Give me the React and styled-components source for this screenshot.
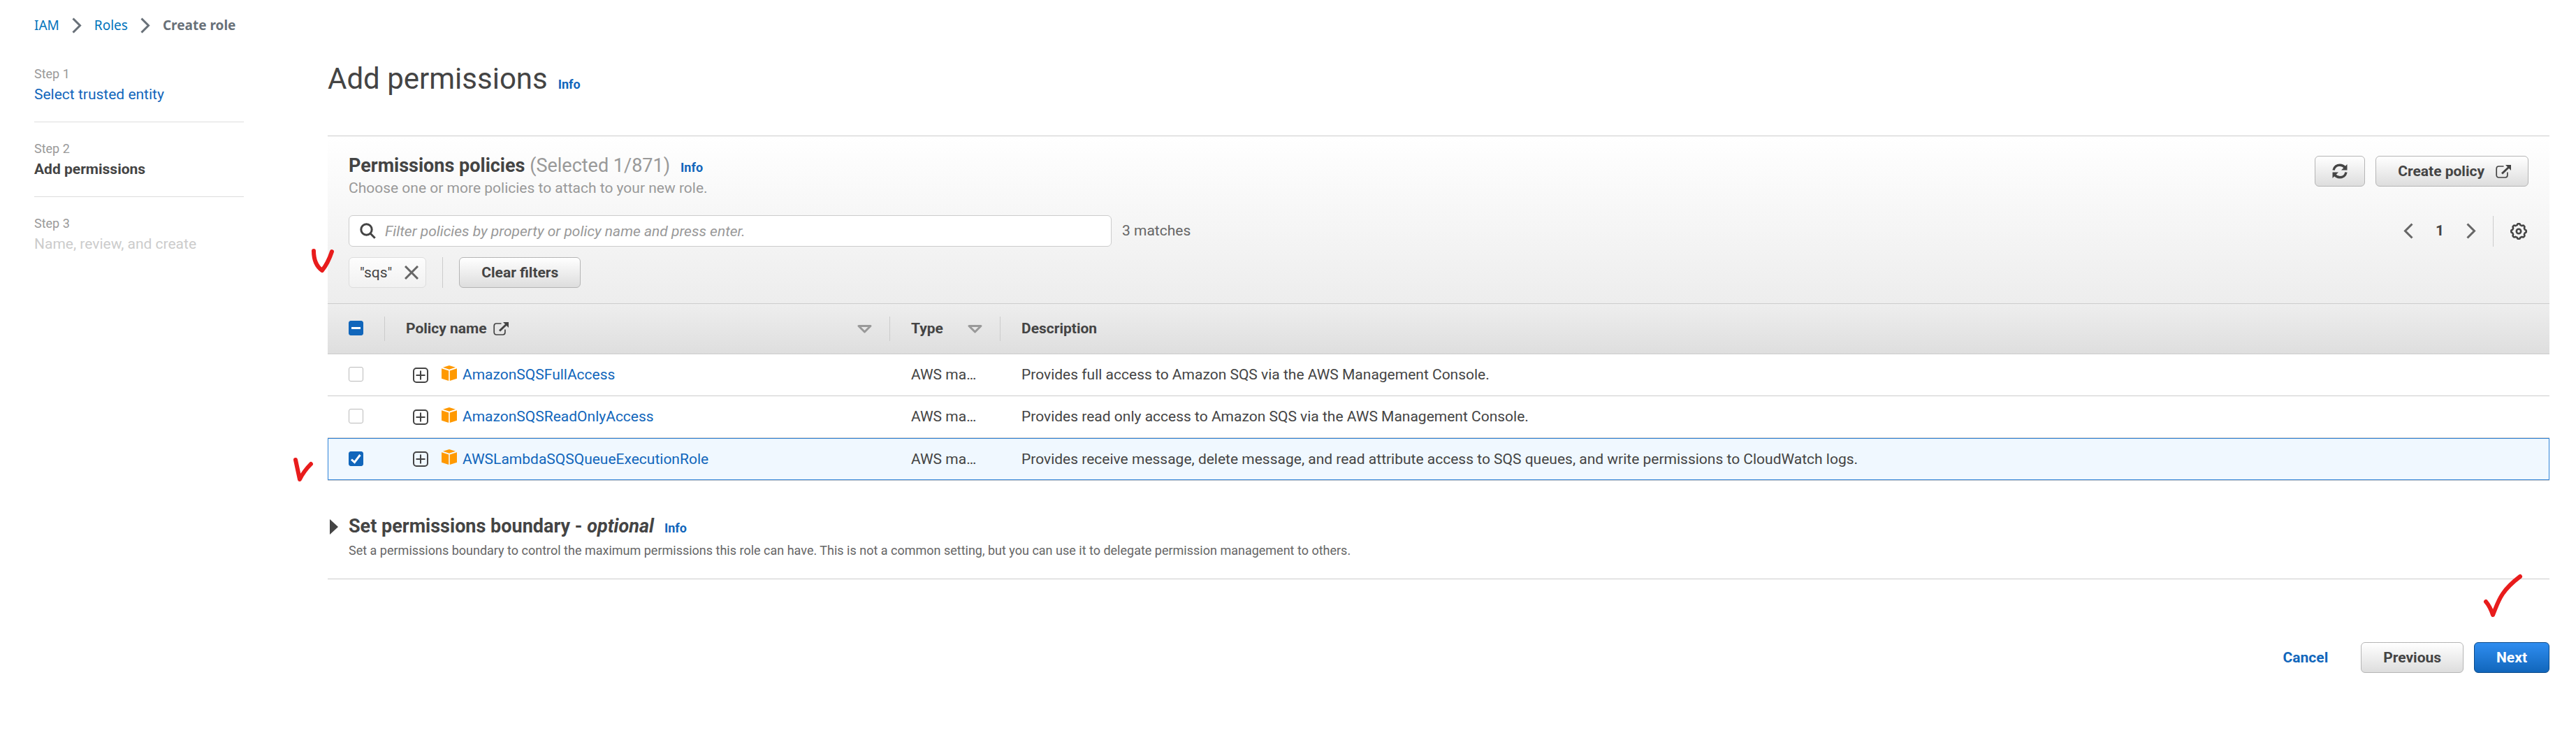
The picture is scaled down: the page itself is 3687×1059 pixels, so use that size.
import React, { useState } from "react";
import styled, { createGlobalStyle, css } from "styled-components";

const color = {
  text: "#444",
  muted: "#999",
  secondary: "#666",
  disabled: "#ccc",
  line: "#ccc",
  link: "#1166bb",
  accent: "#1166bb",
  selectedLine: "#3184d8",
  selectedFill: "#f0f8ff",
  ink: "#e81c1c",
};

const GlobalStyle = createGlobalStyle`
  *, *::before, *::after { box-sizing: border-box; }
  body {
    margin: 0;
    background: #fff;
    color: ${color.text};
    font-family: Roboto, "Liberation Sans", sans-serif;
    font-size: 21px;
    line-height: 27px;
  }
  button, input { font: inherit; color: inherit; }
  svg { display: block; flex: none; }
`;

const Page = styled.div`
  padding: 23px 38px 48px 49px;
`;

const Breadcrumbs = styled.nav`
  display: flex;
  align-items: center;
  gap: 18px;
  font-family: "Noto Sans", "Open Sans", sans-serif;
  font-size: 19px;
  color: #687078;
`;

const Crumb = styled.a`
  color: #0073bb;
  text-decoration: none;
`;

const CurrentCrumb = styled.strong`
  font-weight: 700;
`;

const Columns = styled.div`
  display: grid;
  grid-template-columns: 300px minmax(0, 1fr);
  gap: 120px;
`;

const Steps = styled.ol`
  list-style: none;
  margin: 0;
  padding: 18px 0 0;
`;

const Step = styled.li`
  padding: 24px 0 22px;
  & + & { border-top: 1px solid #ddd; }
`;

const StepLabel = styled.div`
  font-size: 18px;
  color: ${color.muted};
`;

const StepTitle = styled.div`
  line-height: 33px;
  font-weight: ${(p) => (p.$current ? 700 : 400)};
  color: ${(p) => (p.$disabled ? color.disabled : color.text)};
`;

const Link = styled.a`
  color: ${color.link};
  text-decoration: none;
`;

const InfoLink = styled(Link)`
  font-size: 18px;
  line-height: 24px;
  font-weight: 700;
`;

const Main = styled.main`
  padding-top: 36px;
`;

const TitleRow = styled.div`
  display: flex;
  align-items: baseline;
  gap: 15px;
`;

const PageTitle = styled.h1`
  margin: 0;
  font-size: 42px;
  line-height: 54px;
  font-weight: 400;
`;

const SectionTitle = styled.h2`
  margin: 0;
  font-size: 27px;
  line-height: 33px;
  font-weight: 700;
`;

const Counter = styled.span`
  font-weight: 400;
  color: ${color.muted};
`;

const Panel = styled.section`
  position: relative;
  margin-top: 54px;
  border-top: 1px solid ${color.line};
`;

const PanelTop = styled.div`
  padding: 26px 30px 22px;
  background: linear-gradient(#fff, #ededed);
`;

const PanelHeader = styled.header`
  display: flex;
  justify-content: space-between;
  align-items: flex-start;
`;

const Description = styled.p`
  margin: 2px 0 0;
  color: ${color.muted};
`;

const Actions = styled.div`
  display: flex;
  justify-content: flex-end;
  gap: 15px;
  padding-top: ${(p) => (p.$inset ? 2 : 0)}px;
`;

const Button = styled.button`
  display: flex;
  align-items: center;
  gap: 16px;
  height: 44px;
  padding: 0 31px;
  border: 1px solid #b5b5b5;
  border-radius: 6px;
  background: linear-gradient(#fff, #ddd);
  font-weight: 700;
  white-space: nowrap;
  ${(p) => p.$trailingIcon && css`padding-right: 24px;`}
  ${(p) => p.$iconOnly && css`padding: 0 24px;`}
  ${(p) => p.$variant === "primary" && css`
    border-color: #0a4a8a;
    background: linear-gradient(#2f8df0, #1166bb);
    color: #fff;
  `}
  ${(p) => p.$variant === "link" && css`
    border-color: transparent;
    background: none;
    color: ${color.link};
  `}
`;

const IconButton = styled.button`
  display: flex;
  align-items: center;
  justify-content: center;
  padding: 0;
  border: 0;
  background: none;
  color: ${(p) => (p.$strong ? color.text : color.secondary)};
`;

const Toolbar = styled.div`
  display: flex;
  align-items: center;
  margin-top: 25px;
`;

const SearchBox = styled.label`
  display: flex;
  align-items: center;
  gap: 13px;
  flex: 0 1 1092px;
  height: 45px;
  padding: 0 15px;
  border: 1px solid ${color.line};
  border-radius: 6px;
  background: #fff;
`;

const SearchInput = styled.input`
  flex: 1;
  min-width: 0;
  height: 100%;
  padding: 0;
  border: 0;
  outline: 0;
  background: none;
  &::placeholder { color: ${color.muted}; font-style: italic; opacity: 1; }
`;

const Matches = styled.span`
  margin-left: 15px;
  color: ${color.secondary};
`;

const Pager = styled.div`
  display: flex;
  align-items: center;
  gap: 24px;
  margin-left: auto;
  padding-right: 2px;
`;

const PageNumber = styled.button`
  padding: 0 8px;
  border: 0;
  background: none;
  font-weight: 700;
`;

const Divider = styled.span`
  width: 1px;
  height: 44px;
  background: ${color.line};
`;

const Filters = styled.div`
  position: relative;
  display: flex;
  align-items: center;
  gap: 23px;
  margin-top: 15px;
`;

const Token = styled.span`
  display: flex;
  align-items: center;
  gap: 18px;
  height: 44px;
  padding: 0 10px 0 15px;
  border: 1px solid #ddd;
  border-radius: 6px;
  background: linear-gradient(#fdfdfd, #f1f1f1);
`;

const Table = styled.table`
  width: 100%;
  table-layout: fixed;
  border-spacing: 0;
  border-bottom: 1px solid ${color.line};
  text-align: left;
`;

const HeadRow = styled.tr`
  background: linear-gradient(#eee, #dedede);
`;

const HeadCell = styled.th`
  width: ${(p) => p.$width || "auto"};
  height: 73px;
  padding: 0;
  border: solid ${color.line};
  border-width: 1px 0;
  font-weight: 700;
`;

const HeadContent = styled.div`
  display: flex;
  align-items: center;
  justify-content: space-between;
  height: 35px;
  padding: 0 25px 0 30px;
  border-right: ${(p) => (p.$last ? "0" : `1px solid ${color.line}`)};
`;

const HeadLabel = styled.span`
  display: flex;
  align-items: center;
  gap: 9px;
`;

const Row = styled.tr`
  background: ${(p) => (p.$selected ? color.selectedFill : "#fff")};
  & > td {
    height: 60px;
    padding: 0 30px;
    white-space: nowrap;
    border-bottom: 1px solid ${color.line};
  }
  ${(p) => p.$selected && css`
    & > td { border: solid ${color.selectedLine}; border-width: 1px 0; }
    & > td:first-child { border-left-width: 1px; padding-left: 29px; }
    & > td:last-child { border-right-width: 1px; }
  `}
`;

const PolicyCell = styled.div`
  display: flex;
  align-items: center;
  padding-left: 10px;
`;

const CubeSlot = styled.span`
  padding: 0 8px 6px 19px;
`;

const CheckWrap = styled.span`
  display: grid;
  width: 21px;
  padding-bottom: 2px;
  & > * { grid-area: 1 / 1; }
  & > svg { pointer-events: none; }
`;

const CheckInput = styled.input`
  appearance: none;
  width: 21px;
  height: 21px;
  margin: 0;
  border: 1px solid ${(p) => (p.$filled ? color.accent : "#bbb")};
  border-radius: 3px;
  background: ${(p) => (p.$filled ? color.accent : "#fff")};
`;

const Boundary = styled.section`
  display: grid;
  grid-template-columns: 30px minmax(0, 1fr);
  margin-top: 49px;
  padding-bottom: 27px;
  border-bottom: 1px solid ${color.line};
`;

const Toggle = styled.button`
  display: flex;
  align-items: center;
  height: 33px;
  padding: 0 0 0 3px;
  border: 0;
  background: none;
`;

const BoundaryText = styled.p`
  margin: 4px 0 0;
  font-size: 18px;
  color: ${color.secondary};
`;

const Footer = styled.footer`
  position: relative;
  margin-top: 90px;
`;

const Mark = styled.svg`
  position: absolute;
  fill: none;
  stroke: ${color.ink};
  stroke-width: 6;
  stroke-linecap: round;
  stroke-linejoin: round;
  pointer-events: none;
`;

const FilterMark = styled(Mark)`
  left: -54px;
  top: -13px;
`;

const RowMark = styled(Mark)`
  left: -50px;
  bottom: -4px;
`;

const NextMark = styled(Mark)`
  right: 37px;
  top: -98px;
`;

const Chevron = ({ left, thick = 3 }) => (
  <svg width="14" height="23" viewBox="0 0 14 23" fill="none" stroke="currentColor" strokeWidth={thick}>
    <path d={left ? "M12.5 1.5 2.5 11.5l10 10" : "M1.5 1.5l10 10-10 10"} />
  </svg>
);

const ExternalIcon = () => (
  <svg width="22" height="19" viewBox="0 0 22 19" fill="none" stroke="currentColor" strokeWidth="2">
    <path d="M11.500 2H4.500A3.300 3.300 0 0 0 1.200 5.200v9.600A3.200 3.200 0 0 0 4.500 18h9.200a3.200 3.200 0 0 0 3.200-3.200V10.500" strokeWidth="1.700" />
    <path d="M9 12.500 18.500 3.500" strokeWidth="3" />
    <path d="M14 0h8v8z" fill="currentColor" stroke="none" />
  </svg>
);

const RefreshIcon = () => (
  <svg width="22" height="22" viewBox="0 0 22 22" fill="none" stroke="currentColor" strokeWidth="3.500">
    <path d="M2 9.500C3 4.500 7 2.200 11 2.200c3 0 5.500 1.300 7.500 3.500" />
    <path d="M20 12.500c-1 5-5 7.300-9 7.300-3 0-5.500-1.300-7.500-3.500" />
    <path d="M21.500 1v8.500H13z" fill="currentColor" stroke="none" />
    <path d="M.5 21v-8.500H9z" fill="currentColor" stroke="none" />
  </svg>
);

const SearchIcon = () => (
  <svg width="23" height="23" viewBox="0 0 23 23" fill="none" stroke={color.text} strokeWidth="3">
    <circle cx="9.500" cy="9.500" r="7.700" />
    <path d="M15 15l6.700 6.700" />
  </svg>
);

const CloseIcon = () => (
  <svg width="20" height="20" viewBox="0 0 20 20" fill="none" stroke={color.secondary} strokeWidth="3">
    <path d="M1 1l18 18M19 1L1 19" />
  </svg>
);

const gearPath = (() => {
  const points = [];
  for (let i = 0; i <= 96; i += 1) {
    const a = (i / 96) * Math.PI * 2;
    const r = 9.9 + 0.9 * Math.tanh(2.2 * Math.cos(8 * a));
    points.push(`${(12 + r * Math.sin(a)).toFixed(2)} ${(12 - r * Math.cos(a)).toFixed(2)}`);
  }
  return `M${points.join("L")}Z`;
})();

const GearIcon = () => (
  <svg width="24" height="24" viewBox="0 0 24 24" fill="none" stroke="currentColor" strokeWidth="2.600">
    <path d={gearPath} />
    <circle cx="12" cy="12" r="3.200" />
  </svg>
);

const SortIcon = () => (
  <svg width="21" height="12" viewBox="0 0 21 12" fill="none" stroke={color.muted} strokeWidth="3" strokeLinejoin="round">
    <path d="M2 1.500h17l-8.500 8.500z" />
  </svg>
);

const ExpandIcon = () => (
  <svg width="22" height="22" viewBox="0 0 22 22" fill="none" stroke={color.text} strokeWidth="2">
    <rect x="1" y="1" width="20" height="20" rx="4" />
    <path d="M11 4.500v13M4.500 11h13" />
  </svg>
);

const CubeIcon = () => (
  <svg width="22" height="22" viewBox="0 0 22 22" fill="#ff9900">
    <path d="M11 0l9 2.800-9 2.900-9-2.900z" />
    <path d="M0 4.300l10.200 3.200V22L0 18.800z" />
    <path d="M22 4.300L11.800 7.500V22L22 18.800z" />
  </svg>
);

const CaretIcon = () => (
  <svg width="12" height="22" viewBox="0 0 12 22" fill={color.text}>
    <path d="M0 0l12 11L0 22z" />
  </svg>
);

function Checkbox({ label, checked, mixed, onChange }) {
  return (
    <CheckWrap>
      <CheckInput type="checkbox" aria-label={label} checked={checked} onChange={onChange} $filled={checked || mixed} />
      {(checked || mixed) && (
        <svg width="21" height="21" viewBox="0 0 21 21" fill="none" stroke="#fff" strokeWidth="3">
          <path d={mixed ? "M4 10.500h13" : "M4 11.500l4.500 4L16.500 5"} />
        </svg>
      )}
    </CheckWrap>
  );
}

const policies = [
  { name: "AmazonSQSFullAccess", text: "Provides full access to Amazon SQS via the AWS Management Console." },
  { name: "AmazonSQSReadOnlyAccess", text: "Provides read only access to Amazon SQS via the AWS Management Console." },
  {
    name: "AWSLambdaSQSQueueExecutionRole",
    text: "Provides receive message, delete message, and read attribute access to SQS queues, and write permissions to CloudWatch logs.",
  },
];

export default function App() {
  const [selected, setSelected] = useState(["AWSLambdaSQSQueueExecutionRole"]);
  const [query, setQuery] = useState("");
  const all = selected.length === policies.length;
  const toggle = (name) =>
    setSelected((s) => (s.includes(name) ? s.filter((n) => n !== name) : [...s, name]));

  return (
    <>
      <GlobalStyle />
      <Page>
        <Breadcrumbs aria-label="Breadcrumbs">
          <Crumb href="#iam">IAM</Crumb>
          <Chevron />
          <Crumb href="#roles">Roles</Crumb>
          <Chevron />
          <CurrentCrumb>Create role</CurrentCrumb>
        </Breadcrumbs>
        <Columns>
          <Steps>
            <Step>
              <StepLabel>Step 1</StepLabel>
              <StepTitle><Link href="#step-1">Select trusted entity</Link></StepTitle>
            </Step>
            <Step>
              <StepLabel>Step 2</StepLabel>
              <StepTitle $current>Add permissions</StepTitle>
            </Step>
            <Step>
              <StepLabel>Step 3</StepLabel>
              <StepTitle $disabled>Name, review, and create</StepTitle>
            </Step>
          </Steps>
          <Main>
            <TitleRow>
              <PageTitle>Add permissions</PageTitle>
              <InfoLink href="#info">Info</InfoLink>
            </TitleRow>

            <Panel>
              <PanelTop>
                <PanelHeader>
                  <div>
                    <TitleRow>
                      <SectionTitle>Permissions policies <Counter>(Selected 1/871)</Counter></SectionTitle>
                      <InfoLink href="#info-policies">Info</InfoLink>
                    </TitleRow>
                    <Description>Choose one or more policies to attach to your new role.</Description>
                  </div>
                  <Actions $inset>
                    <Button type="button" aria-label="Refresh" $iconOnly><RefreshIcon /></Button>
                    <Button type="button" $trailingIcon>Create policy <ExternalIcon /></Button>
                  </Actions>
                </PanelHeader>
                <Toolbar>
                  <SearchBox>
                    <SearchIcon />
                    <SearchInput
                      type="text"
                      aria-label="Filter policies"
                      placeholder="Filter policies by property or policy name and press enter."
                      value={query}
                      onChange={(e) => setQuery(e.target.value)}
                    />
                  </SearchBox>
                  <Matches>3 matches</Matches>
                  <Pager>
                    <IconButton type="button" aria-label="Previous page"><Chevron left /></IconButton>
                    <PageNumber type="button">1</PageNumber>
                    <IconButton type="button" aria-label="Next page"><Chevron /></IconButton>
                    <Divider />
                    <IconButton type="button" aria-label="Preferences" $strong><GearIcon /></IconButton>
                  </Pager>
                </Toolbar>
                <Filters>
                  <Token>
                    "sqs"
                    <IconButton type="button" aria-label="Remove filter"><CloseIcon /></IconButton>
                  </Token>
                  <Divider />
                  <Button type="button">Clear filters</Button>
                  <FilterMark width="36" height="36" viewBox="0 0 36 36">
                    <path d="M4 4C4 18 9 27 16 32C21 26 26 17 30 5" />
                  </FilterMark>
                </Filters>
              </PanelTop>
              <Table>
                <thead>
                  <HeadRow>
                    <HeadCell $width="82px">
                      <HeadContent>
                        <Checkbox
                          label="Select all policies"
                          checked={all}
                          mixed={!all && selected.length > 0}
                          onChange={() => setSelected(all ? [] : policies.map((p) => p.name))}
                        />
                      </HeadContent>
                    </HeadCell>
                    <HeadCell $width="723px">
                      <HeadContent>
                        <HeadLabel>Policy name <ExternalIcon /></HeadLabel>
                        <SortIcon />
                      </HeadContent>
                    </HeadCell>
                    <HeadCell $width="158px">
                      <HeadContent>Type <SortIcon /></HeadContent>
                    </HeadCell>
                    <HeadCell>
                      <HeadContent $last>Description</HeadContent>
                    </HeadCell>
                  </HeadRow>
                </thead>
                <tbody>
                  {policies.map((p) => (
                    <Row key={p.name} $selected={selected.includes(p.name)}>
                      <td>
                        <Checkbox label={p.name} checked={selected.includes(p.name)} onChange={() => toggle(p.name)} />
                      </td>
                      <td>
                        <PolicyCell>
                          <IconButton type="button" aria-label={`Expand ${p.name}`}><ExpandIcon /></IconButton>
                          <CubeSlot><CubeIcon /></CubeSlot>
                          <Link href={`#${p.name}`}>{p.name}</Link>
                        </PolicyCell>
                      </td>
                      <td title="AWS managed">AWS ma…</td>
                      <td>{p.text}</td>
                    </Row>
                  ))}
                </tbody>
              </Table>
              <RowMark width="34" height="38" viewBox="0 0 34 38">
                <path d="M4 4L10 32Q16 20 26 10" />
              </RowMark>
            </Panel>

            <Boundary>
              <Toggle type="button" aria-label="Set permissions boundary" aria-expanded="false"><CaretIcon /></Toggle>
              <div>
                <TitleRow>
                  <SectionTitle>Set permissions boundary - <em>optional</em></SectionTitle>
                  <InfoLink href="#info-boundary">Info</InfoLink>
                </TitleRow>
                <BoundaryText>
                  Set a permissions boundary to control the maximum permissions this role can have. This is not a common setting, but you can use it to delegate permission management to others.
                </BoundaryText>
              </div>
            </Boundary>

            <Footer>
              <Actions>
                <Button type="button" $variant="link">Cancel</Button>
                <Button type="button">Previous</Button>
                <Button type="button" $variant="primary">Next</Button>
              </Actions>
              <NextMark width="58" height="64" viewBox="0 0 58 64">
                <path d="M4 40Q10 47 14 59C22 40 24 26 53 4" />
              </NextMark>
            </Footer>
          </Main>
        </Columns>
      </Page>
    </>
  );
}
